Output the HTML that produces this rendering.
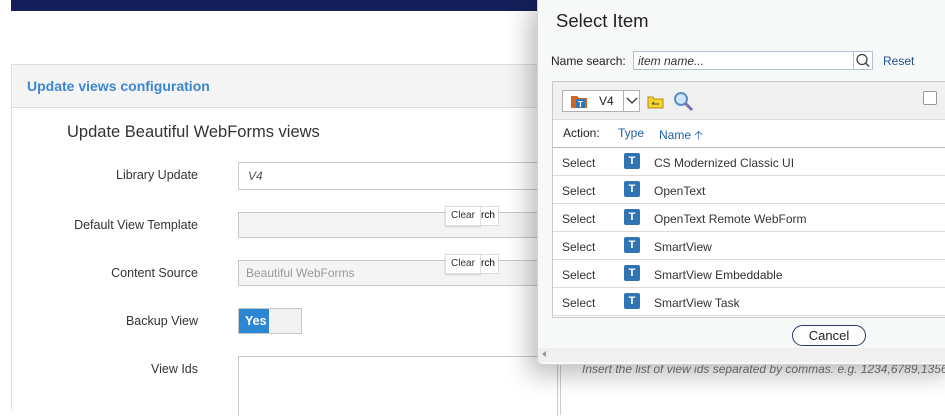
<!DOCTYPE html>
<html><head><meta charset="utf-8"><style>
*{box-sizing:border-box;margin:0;padding:0}
body{width:945px;height:405px;overflow:hidden;background:#fff;font-family:"Liberation Sans",Arial,sans-serif;position:relative}
.a{position:absolute}
.lbl{position:absolute;right:747px;font-size:12.5px;color:#333;text-align:right;white-space:nowrap}
.inp{position:absolute;left:238px;width:320px;border:1px solid #c8c8c8;background:#f4f4f4}
.clr{position:absolute;left:445px;width:36px;height:20px;border:1px solid #ddd;background:#fff;font-size:10px;color:#333;box-shadow:0 1px 2px rgba(0,0,0,.15);padding:3px 0 0 5px}
.dlg{position:absolute;left:537px;top:-5px;width:420px;height:370px;background:#f7f8f8;border:1px solid #cfd2d4;border-radius:6px;box-shadow:-8px 10px 24px rgba(0,0,0,.25)}
.row{position:absolute;left:553px;width:400px;height:28px;border-bottom:1px solid #dcdcdc;background:#fff;font-size:12px;color:#333}
.row span{position:absolute;top:8px}
.ti{position:absolute;left:71px;top:5px;width:16px;height:16px;background:#2f75b3;border-radius:2px;color:#fff;font-size:11px;font-weight:bold;text-align:center;line-height:16px}
</style></head><body>
<div class="a" style="left:11px;top:0;width:526px;height:11px;background:#161f5b"></div>
<div class="a" style="left:11px;top:64px;width:560px;height:345px;border:1px solid #ddd;border-right:none;border-bottom:none"></div>
<div class="a" style="left:12px;top:65px;width:550px;height:43px;background:#f4f4f4;border-bottom:1px solid #ddd"></div>
<div class="a" style="left:27px;top:78px;font-size:14px;font-weight:bold;color:#3c87d0">Update views configuration</div>
<div class="a" style="left:67px;top:123px;font-size:16.5px;color:#333">Update Beautiful WebForms views</div>
<div class="lbl" style="top:168px">Library Update</div>
<div class="inp" style="top:162px;height:28px;background:#fff"><span class="a" style="left:9px;top:6px;font-size:12px;font-style:italic;color:#555">V4</span></div>
<div class="lbl" style="top:218px">Default View Template</div>
<div class="inp" style="top:212px;height:26px"></div>
<div class="clr" style="top:206px">Clear</div><div class="a" style="left:480px;top:206px;width:19px;height:20px;border:1px solid #ddd;background:#fff;font-size:10px;padding-top:3px">rch</div>
<div class="lbl" style="top:266px">Content Source</div>
<div class="inp" style="top:260px;height:26px"><span class="a" style="left:7px;top:5px;font-size:12px;color:#999">Beautiful WebForms</span></div>
<div class="clr" style="top:254px">Clear</div><div class="a" style="left:480px;top:254px;width:19px;height:20px;border:1px solid #ddd;background:#fff;font-size:10px;padding-top:3px">rch</div>
<div class="lbl" style="top:314px">Backup View</div>
<div class="a" style="left:238px;top:308px;width:64px;height:26px;border:1px solid #c8c8c8;background:#f2f2f2"><div style="width:30px;height:24px;background:#2b87d1;color:#fff;font-size:12.5px;font-weight:bold;padding:5px 0 0 6px">Yes</div></div>
<div class="lbl" style="top:362px">View Ids</div>
<div class="a" style="left:238px;top:356px;width:320px;height:60px;border:1px solid #c8c8c8;border-bottom:none"></div>
<div class="a" style="left:560px;top:355px;width:1px;height:60px;background:#ccc"></div>
<div class="a" style="left:582px;top:362px;font-size:12px;font-style:italic;color:#777;white-space:nowrap">Insert the list of view ids separated by commas. e.g. 1234,6789,13567</div>

<div class="dlg"></div>
<div class="a" style="left:556px;top:10px;font-size:18.5px;color:#222">Select Item</div>
<div class="a" style="left:551px;top:54px;font-size:12px;color:#222">Name search:</div>
<div class="a" style="left:633px;top:51px;width:221px;height:19px;border:1px solid #b5c3d0;background:#fff;font-size:12px;font-style:italic;color:#333;padding:2px 0 0 4px">item name...</div>
<div class="a" style="left:853px;top:51px;width:20px;height:19px;border:1px solid #b5c3d0;background:#fff"><svg width="18" height="17"><circle cx="8" cy="7.5" r="5" fill="none" stroke="#444" stroke-width="1.3"/><line x1="11.5" y1="11" x2="15" y2="14.5" stroke="#444" stroke-width="1.5"/></svg></div>
<div class="a" style="left:883px;top:54px;font-size:12px;color:#1f4e8a">Reset</div>
<div class="a" style="left:552px;top:81px;width:400px;height:237px;border:1px solid #c8c8c8;background:#fff"></div>
<div class="a" style="left:553px;top:82px;width:400px;height:38px;background:#f0f0f0;border-bottom:1px solid #ddd"></div>
<div class="a" style="left:562px;top:90px;width:78px;height:22px;border:1px solid #b0b0b0;background:#fff"></div>
<div class="a" style="left:623px;top:90px;width:1px;height:22px;background:#b0b0b0"></div>
<svg class="a" style="left:570px;top:93px" width="18" height="16"><path d="M1 3h6l2 2h8v10H1z" fill="#d1661c"/><rect x="6" y="6" width="9" height="9" rx="1" fill="#2f75b3"/><text x="8" y="14" font-size="8" fill="#fff" font-weight="bold" font-family="Liberation Sans">T</text></svg>
<div class="a" style="left:599px;top:94px;font-size:12px;color:#222">V4</div>
<svg class="a" style="left:626px;top:97px" width="12" height="8"><path d="M1 1l5 5 5-5" fill="none" stroke="#333" stroke-width="1.3"/></svg>
<svg class="a" style="left:647px;top:95px" width="17" height="14"><path d="M1 2h5l1 2h9v9H1z" fill="#f3d62a" stroke="#b09010"/><path d="M5 9h7M5 9l2-2" stroke="#444" fill="none"/></svg>
<svg class="a" style="left:673px;top:91px" width="22" height="21"><circle cx="8" cy="8" r="6" fill="#cfe6fb" stroke="#5a8ec9" stroke-width="2"/><line x1="12" y1="12" x2="19" y2="19" stroke="#7a6fb0" stroke-width="3"/></svg>
<div class="a" style="left:923px;top:91px;width:14px;height:14px;border:1px solid #999;background:#fff;border-radius:2px"></div>
<div class="a" style="left:563px;top:126px;font-size:12px;color:#222">Action:</div>
<div class="a" style="left:618px;top:126px;font-size:12px;color:#1f5fa0">Type</div>
<div class="a" style="left:659px;top:126px;font-size:12px;color:#1f5fa0">Name &#129121;</div>
<div class="a" style="left:553px;top:147px;width:400px;height:1px;background:#bbb"></div>
<div class="row" style="top:148px"><span style="left:9px">Select</span><div class="ti">T</div><span style="left:101px">CS Modernized Classic UI</span></div>
<div class="row" style="top:176px"><span style="left:9px">Select</span><div class="ti">T</div><span style="left:101px">OpenText</span></div>
<div class="row" style="top:204px"><span style="left:9px">Select</span><div class="ti">T</div><span style="left:101px">OpenText Remote WebForm</span></div>
<div class="row" style="top:232px"><span style="left:9px">Select</span><div class="ti">T</div><span style="left:101px">SmartView</span></div>
<div class="row" style="top:260px"><span style="left:9px">Select</span><div class="ti">T</div><span style="left:101px">SmartView Embeddable</span></div>
<div class="row" style="top:288px"><span style="left:9px">Select</span><div class="ti">T</div><span style="left:101px">SmartView Task</span></div>
<div class="a" style="left:792px;top:325px;width:74px;height:21px;border:1px solid #2a3a6a;border-radius:11px;background:#fff;font-size:13px;color:#222;text-align:center;line-height:19px">Cancel</div>
<div class="a" style="left:538px;top:348px;width:410px;height:14px;background:#f0f0f0"></div>
<div class="a" style="left:542px;top:351px;width:0;height:0;border-top:3px solid transparent;border-bottom:3px solid transparent;border-right:4px solid #999"></div>
</body></html>
